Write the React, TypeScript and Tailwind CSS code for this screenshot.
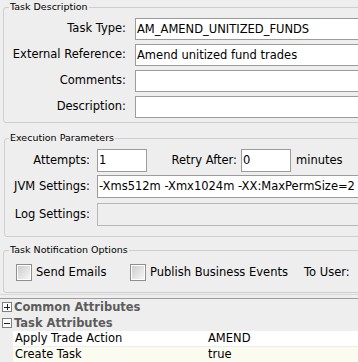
// Task editor panel: three fieldsets plus the attribute tree below

const LABEL = "text-right whitespace-nowrap";
const LEGEND = "px-[1px] text-[9.5px] leading-[14px]";

function Field({ value = "", className = "", disabled = false }: { value?: string; className?: string; disabled?: boolean }) {
  return (
    <div
      className={`shrink-0 border pl-[1px] whitespace-nowrap overflow-hidden ${
        disabled ? "border-[#b8b8b8] bg-[#eeeeee]" : "border-[#9c9c9c] bg-white"
      } ${className}`}
    >
      {value}
    </div>
  );
}

function Check({ label, className = "" }: { label: string; className?: string }) {
  return (
    <div className={`flex items-center ${className}`}>
      <div className="h-[17px] w-[16px] shrink-0 border border-[#8e8f8f] p-[1px] bg-white">
        <div className="h-full w-full bg-gradient-to-br from-[#cdcdcd] to-[#f6f6f6]" />
      </div>
      <span className="ml-[4px] whitespace-nowrap">{label}</span>
    </div>
  );
}

function TreeHeader({ open, label }: { open: boolean; label: string }) {
  return (
    <div className="flex h-[16px] items-center">
      <div className="relative ml-[2px] h-[10px] w-[10px] shrink-0 border border-[#7f7f7f] bg-white">
        <div className="absolute left-[1px] top-[3.5px] h-[1px] w-[6px] bg-[#222]" />
        {!open && <div className="absolute left-[3.5px] top-[1px] h-[6px] w-[1px] bg-[#222]" />}
      </div>
      <span className="ml-[2px] font-bold text-[#5c5c5c] whitespace-nowrap">{label}</span>
    </div>
  );
}

const ATTRS = [
  { name: "Apply Trade Action", value: "AMEND", bg: "bg-white" },
  { name: "Create Task", value: "true", bg: "bg-[#fbfbf0]" },
];

export default function App() {
  return (
    <div className="h-[362px] w-[358px] overflow-hidden bg-[#eeeeee] text-[11.5px] text-black font-['DejaVu_Sans',sans-serif]">
      {/* Task Description */}
      <fieldset className="ml-[3px] w-[420px] rounded-[3px] border border-[#cfcfcf] pb-[4px]">
        <legend className={`ml-[5px] ${LEGEND}`}>Task Description</legend>
        <div className="flex flex-col gap-[4px] pt-[4px]">
          {[
            ["Task Type:", "AM_AMEND_UNITIZED_FUNDS"],
            ["External Reference:", "Amend unitized fund trades"],
            ["Comments:", ""],
            ["Description:", ""],
          ].map(([label, value]) => (
            <div key={label} className="flex items-center">
              <span className={`w-[122px] ${LABEL}`}>{label}</span>
              <Field value={value} className="ml-[9px] h-[22px] w-[285px] leading-[20px]" />
            </div>
          ))}
        </div>
      </fieldset>

      {/* Execution Parameters */}
      <fieldset className="ml-[4px] mt-[8px] w-[420px] rounded-[3px] border border-[#cfcfcf] pb-[10px]">
        <legend className={`ml-[4px] ${LEGEND}`}>Execution Parameters</legend>
        <div className="flex flex-col pt-[4px]">
          <div className="flex items-center">
            <span className={`w-[85px] ${LABEL}`}>Attempts:</span>
            <Field value="1" className="ml-[7px] h-[23px] w-[50px] leading-[21px]" />
            <span className={`w-[90px] ${LABEL}`}>Retry After:</span>
            <Field value="0" className="ml-[4px] h-[23px] w-[50px] leading-[21px]" />
            <span className="ml-[5px]">minutes</span>
          </div>
          <div className="mt-[3px] flex items-center">
            <span className={`w-[85px] ${LABEL}`}>JVM Settings:</span>
            <Field value="-Xms512m -Xmx1024m -XX:MaxPermSize=2" className="ml-[7px] h-[23px] w-[310px] leading-[21px]" />
          </div>
          <div className="mt-[5px] flex items-center">
            <span className={`w-[85px] ${LABEL}`}>Log Settings:</span>
            <Field disabled className="ml-[7px] h-[23px] w-[310px]" />
          </div>
        </div>
      </fieldset>

      {/* Task Notification Options */}
      <fieldset className="ml-[3px] mt-[6px] w-[420px] rounded-[3px] border border-[#cfcfcf] pb-[11px]">
        <legend className={`ml-[5px] ${LEGEND}`}>Task Notification Options</legend>
        <div className="flex items-center pl-[12px] pt-[7px]">
          <Check label="Send Emails" className="w-[114px]" />
          <Check label="Publish Business Events" className="w-[174px]" />
          <span className="whitespace-nowrap">To User:</span>
        </div>
      </fieldset>

      {/* split divider */}
      <div className="mt-[1px] h-[1px] bg-[#d9d9d9]" />
      <div className="mt-[3px] h-[1px] bg-[#9d9d9d]" />

      {/* attribute tree */}
      <TreeHeader open={false} label="Common Attributes" />
      <TreeHeader open label="Task Attributes" />
      <div className="ml-[13px]">
        {ATTRS.map((a) => (
          <div key={a.name} className={`flex h-[16px] items-center border-b border-[#ececec] ${a.bg}`}>
            <span className="w-[193px] pl-[2px] whitespace-nowrap">{a.name}</span>
            <span className="pl-[2px]">{a.value}</span>
          </div>
        ))}
      </div>
    </div>
  );
}
